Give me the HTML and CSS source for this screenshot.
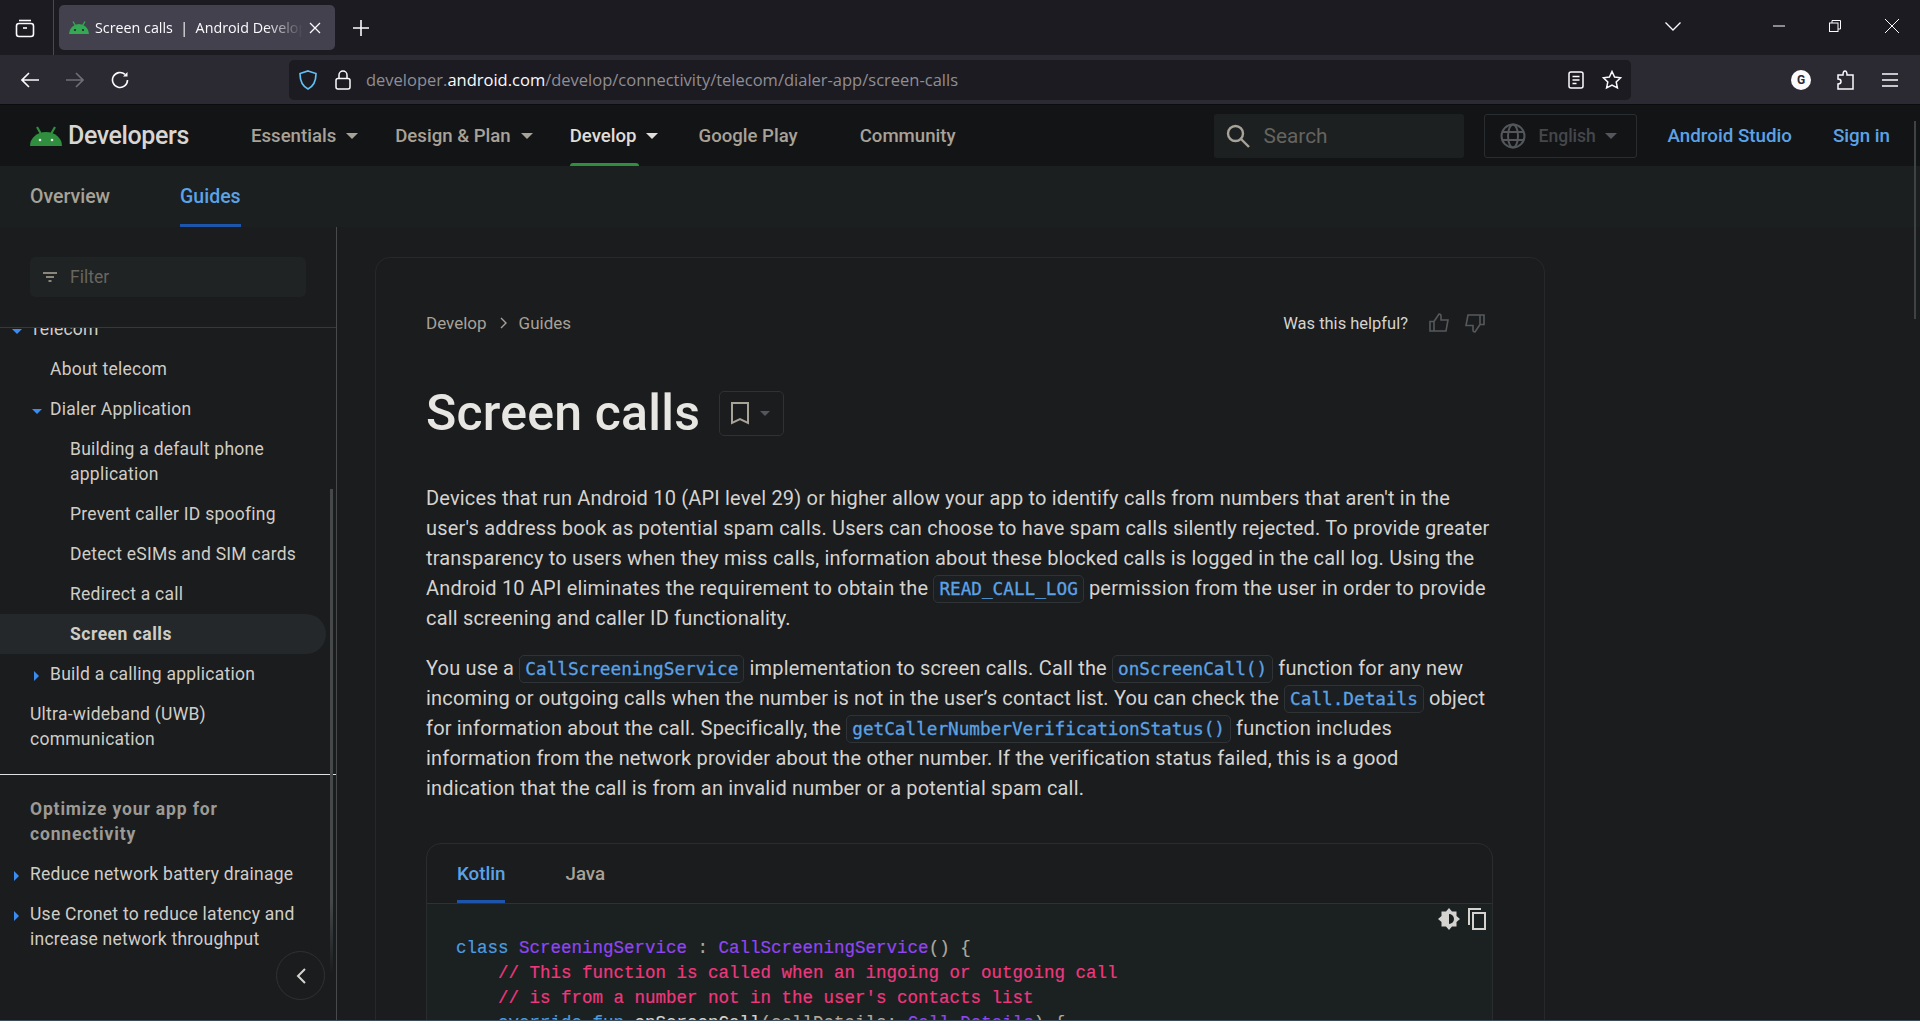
FILE: index.html
```html
<!DOCTYPE html>
<html lang="en">
<head>
    <meta charset="UTF-8">
    <title>Screen calls | Android Developers</title>
    <link rel="stylesheet" href="styles.css">
</head>
<body>
    <!-- browser tab strip -->
    <div class="tabstrip">
        <div class="tabstrip-left">
            <svg class="ico" width="22" height="22" viewBox="0 0 22 22" fill="none" stroke="#fbfbfe" stroke-width="1.6"><path d="M5 3.5h12"/><rect x="2.5" y="6.5" width="17" height="13" rx="2.5"/><path d="M9 11h4"/></svg>
        </div>
        <div class="tab">
            <svg class="tab-fav" width="20" height="13" viewBox="0 0 20 13"><path d="M0 13a10 10 0 0 1 20 0z" fill="#34a853"/><path d="M4 .5l3 5M16 .5l-3 5" stroke="#34a853" stroke-width="1.4"/><circle cx="6" cy="9" r="1" fill="#1c1b22"/><circle cx="14" cy="9" r="1" fill="#1c1b22"/></svg>
            <span class="tab-title">Screen calls&nbsp; |&nbsp; Android Developers</span>
            <svg width="12" height="12" viewBox="0 0 12 12" stroke="#fbfbfe" stroke-width="1.3"><path d="M1 1l10 10M11 1L1 11"/></svg>
        </div>
        <svg class="newtab" width="16" height="16" viewBox="0 0 16 16" stroke="#fbfbfe" stroke-width="1.6"><path d="M8 0v16M0 8h16"/></svg>
        <div class="tabstrip-right">
            <svg class="tabs-menu" width="16" height="9" viewBox="0 0 16 9" fill="none" stroke="#fbfbfe" stroke-width="1.3"><path d="M.5.5L8 8 15.500.5"/></svg>
            <svg class="win-min" width="12" height="2" viewBox="0 0 12 2" stroke="#fbfbfe" stroke-width="1"><path d="M0 1h12"/></svg>
            <svg class="win-max" width="12" height="12" viewBox="0 0 12 12" fill="none" stroke="#fbfbfe" stroke-width="1"><rect x=".5" y="3" width="8.500" height="8.500"/><path d="M3 3V.5h8.500V9H9"/></svg>
            <svg class="win-close" width="14" height="14" viewBox="0 0 14 14" stroke="#fbfbfe" stroke-width="1"><path d="M0 0l14 14M14 0L0 14"/></svg>
        </div>
    </div>

    <!-- browser toolbar -->
    <div class="toolbar">
        <svg class="tb-back" width="18" height="16" viewBox="0 0 18 16" fill="none" stroke="#fbfbfe" stroke-width="1.600"><path d="M18 8H1M8 1L1 8l7 7"/></svg>
        <svg class="tb-fwd" width="18" height="16" viewBox="0 0 18 16" fill="none" stroke="#6f6e75" stroke-width="1.600"><path d="M0 8h17M10 1l7 7-7 7"/></svg>
        <svg class="tb-reload" width="18" height="18" viewBox="0 0 18 18" fill="none" stroke="#fbfbfe" stroke-width="1.600"><path d="M16.500 9a7.500 7.500 0 1 1-2.500-5.600"/><path d="M16.500 1v4.500H12" fill="#fbfbfe" stroke="none"/></svg>
        <div class="urlbar">
            <svg class="url-shield" width="18" height="20" viewBox="0 0 18 20" fill="none" stroke="#60c0f5" stroke-width="1.700"><path d="M9 1l8 2.500c0 7-2 12.500-8 15.500C3 16 1 10.500 1 3.500z"/></svg>
            <svg class="url-lock" width="16" height="20" viewBox="0 0 16 20" fill="none" stroke="#fbfbfe" stroke-width="1.500"><rect x="1" y="8.500" width="14" height="10.500" rx="2"/><path d="M4 8.500V5a4 4 0 0 1 8 0v3.500"/></svg>
            <span class="url-text">developer.<b>android.com</b>/develop/connectivity/telecom/dialer-app/screen-calls</span>
            <svg class="url-reader" width="16" height="18" viewBox="0 0 16 18" fill="none" stroke="#fbfbfe" stroke-width="1.500"><rect x="1" y="1" width="14" height="16" rx="2"/><path d="M4.500 5.500h7M4.500 9h7M4.500 12.500h4"/></svg>
            <svg class="url-star" width="20" height="20" viewBox="0 0 20 20" fill="none" stroke="#fbfbfe" stroke-width="1.500"><path d="M10 1.500l2.600 5.600 6 .7-4.400 4.100 1.200 6L10 15l-5.400 2.900 1.200-6L1.400 7.800l6-.7z"/></svg>
        </div>
        <div class="tb-right">
            <span class="tb-g">G</span>
            <svg class="tb-ext" width="18" height="20" viewBox="0 0 18 20" fill="none" stroke="#fbfbfe" stroke-width="1.500"><path d="M8 1c2 0 2 2 2 4h6v14H1v-5c2 0 3-1 3-2.500S3 9 1 9V5h5c0-2 0-4 2-4z"/></svg>
            <svg class="tb-menu" width="16" height="14" viewBox="0 0 16 14" stroke="#fbfbfe" stroke-width="1.500"><path d="M0 1h16M0 7h16M0 13h16"/></svg>
        </div>
    </div>

    <!-- site header -->
    <header class="site-header">
        <a class="logo">
            <svg width="32" height="20" viewBox="0 0 32 20"><path d="M0 20a16 14 0 0 1 32 0z" fill="#2f8f3e"/><path d="M7 1l4 7M25 1l-4 7" stroke="#2f8f3e" stroke-width="2.200"/><circle cx="10" cy="14" r="1.300" fill="#e8e6e3"/><circle cx="22" cy="14" r="1.300" fill="#e8e6e3"/></svg>
            <span class="logo-text">Developers</span>
        </a>
        <nav class="top-nav">
            <a class="top-link">Essentials<i class="caret"></i></a>
            <a class="top-link">Design &amp; Plan<i class="caret"></i></a>
            <a class="top-link is-active">Develop<i class="caret"></i></a>
            <a class="top-link plain">Google Play</a>
            <a class="top-link">Community</a>
        </nav>
        <div class="search">
            <svg width="24" height="24" viewBox="0 0 24 24" fill="none" stroke="#a8a297" stroke-width="2.400"><circle cx="9.500" cy="9.500" r="7.500"/><path d="M15 15l8 8"/></svg>
            <span>Search</span>
        </div>
        <div class="lang">
            <svg width="26" height="26" viewBox="0 0 26 26" fill="none" stroke="#53565a" stroke-width="2"><circle cx="13" cy="13" r="11.500"/><ellipse cx="13" cy="13" rx="5" ry="11.500"/><path d="M2 9h22M2 17h22"/></svg>
            <span>English</span>
            <i class="caret dim"></i>
        </div>
        <a class="head-link studio">Android Studio</a>
        <a class="head-link">Sign in</a>
    </header>

    <div class="subnav">
        <a class="sub-link">Overview</a>
        <a class="sub-link is-active">Guides</a>
    </div>

    <div class="page">
        <aside class="sidebar">
            <div class="filter-wrap">
                <div class="filter">
                    <svg width="14" height="10" viewBox="0 0 14 10" stroke="#b0a899" stroke-width="1.500"><path d="M0 1h14M3 5h8M5.500 9h3"/></svg>
                    <span>Filter</span>
                </div>
            </div>
            <div class="side-scroll">
                <div class="side-items">
                    <div class="item d0"><i class="tw down"></i>Telecom</div>
                    <div class="item d1">About telecom</div>
                    <div class="item d1"><i class="tw down"></i>Dialer Application</div>
                    <div class="item d2">Building a default phone application</div>
                    <div class="item d2">Prevent caller ID spoofing</div>
                    <div class="item d2">Detect eSIMs and SIM cards</div>
                    <div class="item d2">Redirect a call</div>
                    <div class="item d2 current">Screen calls</div>
                    <div class="item d1"><i class="tw right"></i>Build a calling application</div>
                    <div class="item d0">Ultra-wideband (UWB) communication</div>
                    <hr class="side-rule">
                    <div class="item d0 heading"><span>Optimize your app for<br>connectivity</span></div>
                    <div class="item d0"><i class="tw right"></i>Reduce network battery drainage</div>
                    <div class="item d0"><i class="tw right"></i>Use Cronet to reduce latency and increase network throughput</div>
                </div>
                <div class="side-thumb"></div>
                <button class="collapse">
                    <svg width="10" height="16" viewBox="0 0 10 16" fill="none" stroke="#d5d3cf" stroke-width="2"><path d="M9 1L2 8l7 7"/></svg>
                </button>
            </div>
        </aside>

        <main class="content">
            <article class="card">
                <div class="crumbs">
                    <a>Develop</a>
                    <svg width="8" height="12" viewBox="0 0 8 12" fill="none" stroke="#a8a297" stroke-width="1.400"><path d="M1 1l5 5-5 5"/></svg>
                    <a>Guides</a>
                    <div class="helpful">
                        <span>Was this helpful?</span>
                        <svg width="20" height="20" viewBox="0 0 20 20" fill="none" stroke="#56595c" stroke-width="1.600"><path d="M1 8.500h4V18H1zM5 8.500L10 1c1.500 0 2 1 2 2v4h7l-2 11H5"/></svg>
                        <svg width="20" height="20" viewBox="0 0 20 20" fill="none" stroke="#56595c" stroke-width="1.600"><path d="M19 2h-4v9.500h4zM15 11.500L10 19c-1.500 0-2-1-2-2v-4.500H1L3 2h12"/></svg>
                    </div>
                </div>

                <div class="title-row">
                    <h1>Screen calls</h1>
                    <button class="bookmark">
                        <svg width="18" height="23" viewBox="0 0 18 23" fill="none" stroke="#a8a297" stroke-width="2"><path d="M1 1h16v20l-8-4-8 4z"/></svg>
                        <i class="caret dim"></i>
                    </button>
                </div>

                <p>Devices that run Android 10 (API level 29) or higher allow your app to identify calls from numbers that aren't in the user's address book as potential spam calls. Users can choose to have spam calls silently rejected. To provide greater transparency to users when they miss calls, information about these blocked calls is logged in the call log. Using the Android 10 API eliminates the requirement to obtain the <code>READ_CALL_LOG</code> permission from the user in order to provide call screening and caller ID functionality.</p>

                <p>You use a <code>CallScreeningService</code> implementation to screen calls. Call the <code>onScreenCall()</code> function for any new incoming or outgoing calls when the number is not in the user’s contact list. You can check the <code>Call.Details</code> object for information about the call. Specifically, the <code>getCallerNumberVerificationStatus()</code> function includes information from the network provider about the other number. If the verification status failed, this is a good indication that the call is from an invalid number or a potential spam call.</p>

                <div class="codebox">
                    <div class="code-tabs">
                        <a class="code-tab is-active">Kotlin</a>
                        <a class="code-tab">Java</a>
                    </div>
                    <div class="code-body">
                        <div class="code-tools">
                            <svg width="22" height="22" viewBox="0 0 22 22"><path d="M11 0l3 3.500h4.500V8L22 11l-3.500 3v4.500H14L11 22l-3-3.500H3.500V14L0 11l3.500-3V3.500H8z" fill="#d5d3cf"/><path d="M11 6a5 5 0 0 1 0 10z" fill="#1b2021"/></svg>
                            <svg width="18" height="22" viewBox="0 0 18 22" fill="none" stroke="#d5d3cf" stroke-width="2"><path d="M13 1H1v16"/><rect x="5" y="5" width="12" height="16"/></svg>
                        </div>
<pre><span class="kw">class</span> <span class="cl">ScreeningService</span> : <span class="cl">CallScreeningService</span>() {
    <span class="cm">// This function is called when an ingoing or outgoing call</span>
    <span class="cm">// is from a number not in the user's contacts list</span>
    <span class="kw">override fun</span> <span class="fn">onScreenCall</span>(callDetails: <span class="cl">Call.Details</span>) {</pre>
                    </div>
                </div>
            </article>
        </main>
    </div>
    <div class="page-thumb"></div>
    <div class="window-edge"></div>
</body>
</html>
```

FILE: styles.css
```css
* {
    box-sizing: border-box;
}
html, body {
    margin: 0;
    height: 1021px;
    overflow: hidden;
}
body {
    display: flex;
    flex-direction: column;
    background-color: #1a1c1e;
    color: #d5d3cf;
    font-family: Roboto, "Liberation Sans", sans-serif;
}
a {
    color: inherit;
    text-decoration: none;
}
svg {
    display: block;
    flex: none;
}
i {
    display: block;
    flex: none;
}

/* browser chrome */
.tabstrip {
    height: 55px;
    flex: none;
    display: flex;
    align-items: flex-start;
    background-color: #1c1b22;
}
.tabstrip-left {
    width: 54px;
    height: 55px;
    padding: 17px 0 0 14px;
    border-right: 1px solid #4a4950;
}
.tab {
    width: 276px;
    height: 45px;
    margin: 5px 0 0 5px;
    padding: 0 14px 0 10px;
    display: flex;
    align-items: center;
    background-color: #42414d;
    border-radius: 5px;
}
.tab-fav {
    margin-right: 6px;
}
.tab-title {
    flex: 1;
    overflow: hidden;
    white-space: nowrap;
    color: #fbfbfe;
    font-family: "Open Sans", sans-serif;
    font-size: 14.300px;
    -webkit-mask-image: linear-gradient(to right, #000 170px, transparent 208px);
    mask-image: linear-gradient(to right, #000 170px, transparent 208px);
}
.newtab {
    margin: 20px 0 0 18px;
}
.tabstrip-right {
    margin-left: auto;
    display: flex;
    align-items: flex-start;
}
.tabs-menu {
    margin: 22px 92px 0 0;
}
.win-min {
    margin: 25px 44px 0 0;
}
.win-max {
    margin: 20px 44px 0 0;
}
.win-close {
    margin: 19px 21px 0 0;
}

.toolbar {
    height: 50px;
    flex: none;
    display: flex;
    align-items: center;
    padding-left: 21px;
    background-color: #2b2a33;
    border-bottom: 1px solid #0c0c0e;
}
.tb-fwd {
    margin-left: 27px;
}
.tb-reload {
    margin-left: 27px;
}
.urlbar {
    width: 1342px;
    height: 40px;
    margin-left: 160px;
    padding: 0 9px 0 10px;
    display: flex;
    align-items: center;
    background-color: #1c1b22;
    border-radius: 5px;
}
.url-lock {
    margin-left: 18px;
}
.url-text {
    margin-left: 15px;
    color: #8f8e94;
    font-family: "Open Sans", sans-serif;
    font-size: 16.500px;
    white-space: nowrap;
}
.url-text b {
    color: #fbfbfe;
    font-weight: 400;
}
.url-reader {
    margin-left: auto;
}
.url-star {
    margin-left: 18px;
}
.tb-right {
    margin-left: auto;
    padding-right: 22px;
    display: flex;
    align-items: center;
}
.tb-g {
    width: 20px;
    height: 20px;
    display: flex;
    align-items: center;
    justify-content: center;
    background-color: #fbfbfe;
    border-radius: 50%;
    color: #2b2a33;
    font-size: 12px;
    font-weight: 700;
}
.tb-ext {
    margin-left: 26px;
}
.tb-menu {
    margin-left: 27px;
}

/* site header */
.site-header {
    height: 61px;
    flex: none;
    display: flex;
    align-items: center;
    padding-left: 30px;
    background-color: #131416;
}
.logo {
    width: 221px;
    display: flex;
    align-items: center;
}
.logo-text {
    margin-left: 6px;
    color: #d8d6d2;
    font-size: 25px;
    font-weight: 500;
    letter-spacing: -.4px;
}
.top-nav {
    height: 61px;
    display: flex;
    gap: 37px;
}
.top-link {
    position: relative;
    display: flex;
    align-items: center;
    color: #a8a297;
    font-size: 18.600px;
    font-weight: 500;
}
.top-link.plain {
    margin-right: 25px;
}
.top-link.is-active {
    margin-right: 3px;
    color: #e0ded9;
}
.top-link.is-active::after {
    content: "";
    position: absolute;
    left: 0;
    bottom: 0;
    width: 69px;
    height: 3px;
    background-color: #2f8f3e;
    border-radius: 3px 3px 0 0;
}
.caret {
    width: 0;
    height: 0;
    margin-left: 10px;
    border-left: 6px solid transparent;
    border-right: 6px solid transparent;
    border-top: 6px solid #a8a297;
}
.top-link.is-active .caret {
    border-top-color: #e0ded9;
}
.caret.dim {
    border-top-color: #53565a;
}
.search {
    width: 250px;
    height: 44px;
    margin-left: auto;
    padding-left: 12px;
    display: flex;
    align-items: center;
    gap: 14px;
    background-color: #1c2021;
    border-radius: 3px;
    color: #66645f;
    font-size: 20.800px;
}
.lang {
    width: 153px;
    height: 44px;
    margin: 0 31px 0 20px;
    padding-left: 15px;
    display: flex;
    align-items: center;
    gap: 13px;
    border: 1px solid #2a2d2f;
    border-radius: 3px;
    color: #45474a;
    font-size: 17.500px;
    font-weight: 500;
}
.lang .caret {
    margin-left: -4px;
}
.head-link {
    margin-right: 30px;
    color: #5ba3e6;
    font-size: 18.750px;
    font-weight: 500;
}
.head-link.studio {
    margin-right: 41px;
}

.subnav {
    height: 61px;
    flex: none;
    display: flex;
    gap: 70px;
    padding-left: 30px;
    background-color: #1b1f20;
}
.sub-link {
    display: flex;
    align-items: center;
    color: #a8a297;
    font-size: 19.500px;
    font-weight: 500;
}
.sub-link.is-active {
    color: #5ba3e6;
    border-bottom: 3px solid #1d55ad;
    padding-top: 3px;
}

/* page body */
.page {
    flex: 1;
    min-height: 0;
    display: flex;
}
.sidebar {
    width: 337px;
    flex: none;
    display: flex;
    flex-direction: column;
    border-right: 1px solid #47494b;
}
.filter-wrap {
    height: 101px;
    flex: none;
    padding: 30px 30px 0;
    border-bottom: 1px solid #36383a;
}
.filter {
    width: 276px;
    height: 40px;
    padding-left: 13px;
    display: flex;
    align-items: center;
    gap: 13px;
    background-color: #1f2324;
    border-radius: 5px;
    color: #68665f;
    font-size: 17.500px;
}
.side-scroll {
    flex: 1;
    min-height: 0;
    position: relative;
    overflow: hidden;
}
.side-items {
    margin-top: -19px;
}
.item {
    width: 326px;
    padding: 7.500px 20px 7.500px 30px;
    display: flex;
    font-size: 17.500px;
    line-height: 25px;
    letter-spacing: .25px;
    color: #d0cdc7;
}
.item.d1 {
    padding-left: 50px;
}
.item.d2 {
    padding-left: 70px;
}
.item.current {
    background-color: #24282a;
    border-radius: 0 20px 20px 0;
    font-weight: 700;
    letter-spacing: .5px;
}
.item.heading {
    color: #9c9a95;
    font-weight: 700;
    letter-spacing: .85px;
}
.tw {
    width: 20px;
    height: 25px;
    margin-left: -20px;
    position: relative;
}
.tw::after {
    content: "";
    position: absolute;
    width: 0;
    height: 0;
}
.tw.down::after {
    left: 2px;
    top: 12px;
    border-left: 5px solid transparent;
    border-right: 5px solid transparent;
    border-top: 5px solid #3a8cf0;
}
.tw.right::after {
    left: 4px;
    top: 9px;
    border-top: 5px solid transparent;
    border-bottom: 5px solid transparent;
    border-left: 5px solid #3a8cf0;
}
.side-rule {
    margin: 15px 0 14px;
    height: 1px;
    border: 0;
    background-color: #e0e0e0;
}
.side-thumb {
    position: absolute;
    top: 161px;
    left: 330px;
    width: 3px;
    height: 485px;
    background: linear-gradient(to bottom, #45494a 85%, transparent);
}
.collapse {
    position: absolute;
    left: 276px;
    top: 623px;
    width: 49px;
    height: 49px;
    display: flex;
    align-items: center;
    justify-content: center;
    padding: 0;
    background-color: #1a1c1e;
    border: 1.500px solid #2f3133;
    border-radius: 50%;
}

.content {
    flex: 1;
    min-width: 0;
    padding: 30px 0 0 38px;
    overflow: hidden;
}
.card {
    width: 1170px;
    height: 1000px;
    padding: 50px 50px 0;
    border: 1px solid #26282a;
    border-radius: 15px;
}
.crumbs {
    height: 30px;
    display: flex;
    align-items: center;
    color: #a8a297;
    font-size: 17px;
}
.crumbs svg {
    margin: 0 11px 0 13px;
}
.helpful {
    margin-left: auto;
    display: flex;
    align-items: center;
    color: #d5d3cf;
    font-size: 16.500px;
    padding-right: 9px;
}
.helpful svg {
    margin: 0 0 0 16px;
}
.helpful span {
    margin-right: 5px;
}
.title-row {
    height: 60px;
    margin-top: 45px;
    display: flex;
    align-items: center;
    gap: 19px;
}
h1 {
    margin: 0;
    color: #e8e6e3;
    font-size: 50px;
    font-weight: 500;
    letter-spacing: .2px;
}
.bookmark {
    width: 65px;
    height: 45px;
    padding: 0 0 0 11px;
    display: flex;
    align-items: center;
    background: none;
    border: 1px solid #2f3133;
    border-radius: 5px;
}
.bookmark .caret {
    margin-left: 11px;
    border-left-width: 5px;
    border-right-width: 5px;
    border-top-width: 5px;
}
p {
    width: 1065px;
    margin: 0 0 20px;
    font-size: 20px;
    line-height: 30px;
    letter-spacing: .18px;
}
.title-row + p {
    margin-top: 40px;
}
code {
    padding: 3px 5px;
    background-color: #1c1f21;
    border: 1px solid #2f3336;
    border-radius: 5px;
    color: #5ba3e6;
    font-family: "DejaVu Sans Mono", monospace;
    font-size: 17.700px;
    line-height: 1;
    letter-spacing: 0;
    -webkit-text-stroke: .3px;
}

.codebox {
    margin-top: 40px;
    width: 1067px;
    height: 400px;
    border: 1px solid #2a2c2e;
    border-radius: 15px 15px 0 0;
}
.code-tabs {
    height: 60px;
    padding-left: 30px;
    display: flex;
    gap: 60px;
    border-bottom: 1px solid #2f3133;
}
.code-tab {
    display: flex;
    align-items: center;
    color: #a8a297;
    font-size: 18.750px;
    font-weight: 500;
}
.code-tab.is-active {
    color: #5ba3e6;
    border-bottom: 3px solid #1d55ad;
    padding-top: 3px;
}
.code-body {
    position: relative;
    height: 340px;
    padding: 32px 0 0 29px;
    background-color: #1b2021;
}
.code-tools {
    position: absolute;
    top: 4px;
    right: 6px;
    display: flex;
    align-items: center;
    gap: 8px;
}
pre {
    margin: 0;
    color: #b0a99c;
    font-family: "Liberation Mono", monospace;
    font-size: 17.500px;
    line-height: 25px;
    -webkit-text-stroke: .2px;
}
.kw {
    color: #4a9de0;
}
.cl {
    color: #9146f0;
}
.cm {
    color: #f0377e;
}
.fn {
    color: #d5d3cf;
}

.page-thumb {
    position: fixed;
    top: 121px;
    left: 1914px;
    width: 2px;
    height: 198px;
    background-color: #3e4445;
}
.window-edge {
    position: fixed;
    left: 0;
    right: 0;
    bottom: 0;
    height: 1px;
    background-color: #3d4c58;
}
```
